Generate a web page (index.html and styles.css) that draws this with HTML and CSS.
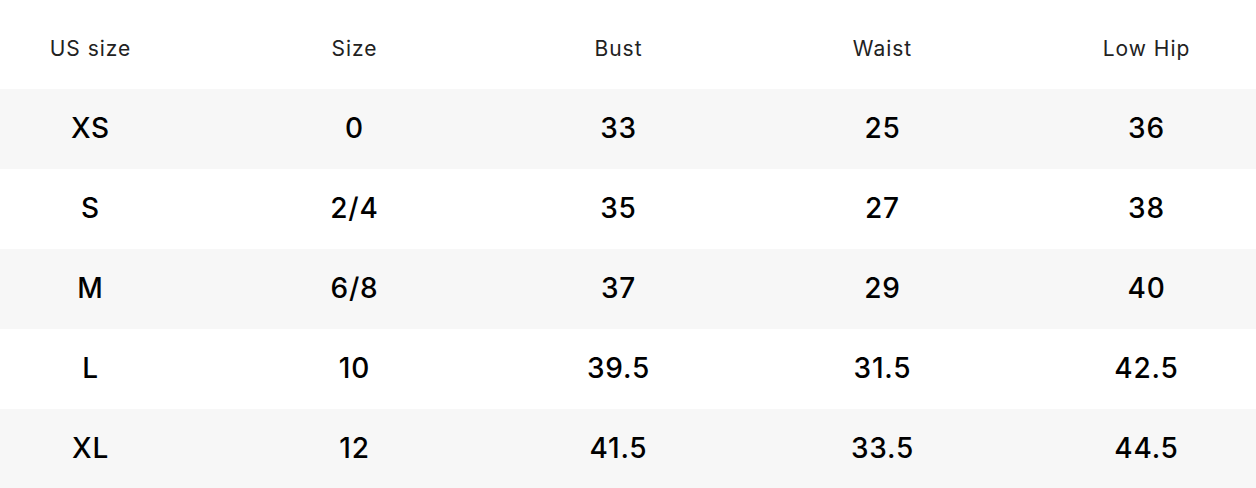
FILE: index.html
```html
<!DOCTYPE html>
<html lang="en">
<head>
<meta charset="utf-8">
<title>Size chart</title>
<link rel="stylesheet" href="styles.css">
</head>
<body>
<div class="chart">
  <div class="row head">
    <div class="cell">US size</div>
    <div class="cell">Size</div>
    <div class="cell">Bust</div>
    <div class="cell">Waist</div>
    <div class="cell">Low Hip</div>
  </div>
  <div class="row shade">
    <div class="cell">XS</div><div class="cell">0</div><div class="cell">33</div><div class="cell">25</div><div class="cell">36</div>
  </div>
  <div class="row">
    <div class="cell">S</div><div class="cell">2/4</div><div class="cell">35</div><div class="cell">27</div><div class="cell">38</div>
  </div>
  <div class="row shade">
    <div class="cell">M</div><div class="cell">6/8</div><div class="cell">37</div><div class="cell">29</div><div class="cell">40</div>
  </div>
  <div class="row">
    <div class="cell">L</div><div class="cell">10</div><div class="cell">39.5</div><div class="cell">31.5</div><div class="cell">42.5</div>
  </div>
  <div class="row shade">
    <div class="cell">XL</div><div class="cell">12</div><div class="cell">41.5</div><div class="cell">33.5</div><div class="cell">44.5</div>
  </div>
</div>
</body>
</html>
```
FILE: styles.css
```css
html, body {
  margin: 0;
  padding: 0;
  background: #ffffff;
}
body {
  font-family: Inter, "Liberation Sans", sans-serif;
  color: #000;
}
.chart {
  display: flex;
  flex-direction: column;
  width: 1256px;
}
.row {
  display: grid;
  grid-template-columns: repeat(5, 181px);
  column-gap: 83px;
  height: 80px;
  align-items: center;
  font-size: 28px;
  line-height: 1;
  letter-spacing: 0.8px;
  font-weight: 500;
  padding-bottom: 3px;
  box-sizing: border-box;
}
.row.head {
  height: 89px;
  font-size: 21px;
  font-weight: 400;
  color: #222;
  letter-spacing: 1px;
  padding-top: 7px;
  padding-bottom: 0;
}
.row.shade {
  background: #f7f7f7;
}
.cell {
  text-align: center;
  white-space: nowrap;
}
```
